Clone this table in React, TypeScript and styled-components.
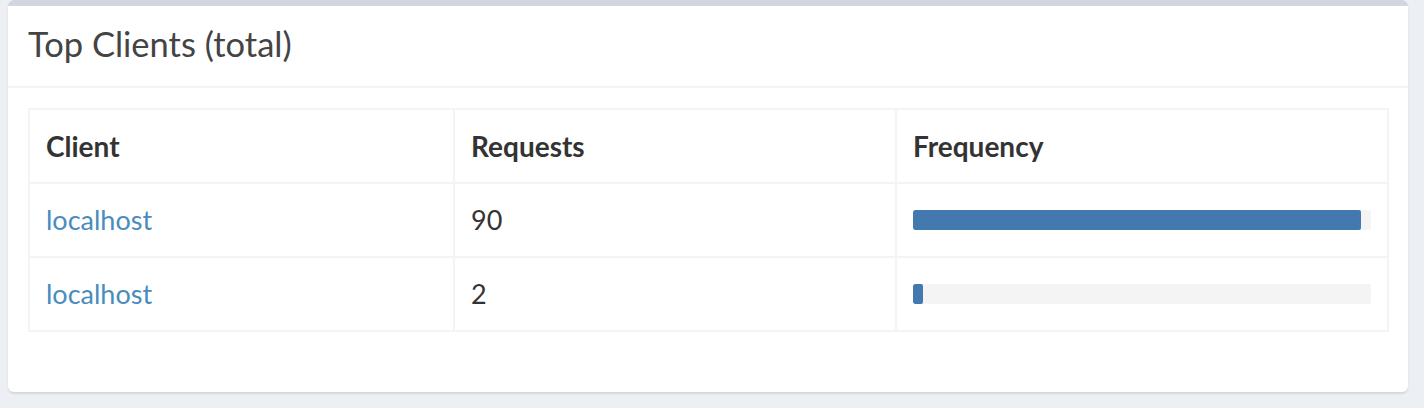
import React from "react";
import styled, { createGlobalStyle } from "styled-components";

const GlobalStyle = createGlobalStyle`
  html, body {
    margin: 0;
    padding: 0;
    background: #ecf0f5;
    font-family: Lato, "Noto Sans", sans-serif;
    color: #333;
  }
`;

const Page = styled.div`
  padding: 0 16px 0 8px;
  height: 408px;
  box-sizing: border-box;
`;

const Box = styled.section`
  background: #fff;
  border-top: 6px solid #d2d6de;
  border-radius: 6px;
  box-shadow: 0 2px 2px rgba(0, 0, 0, 0.1);
`;

const BoxHeader = styled.header`
  display: flex;
  align-items: center;
  height: 82px;
  padding: 0 20px 4px;
  box-sizing: border-box;
  border-bottom: 2px solid #f4f4f4;
`;

const Title = styled.h3`
  margin: 0;
  font-size: 34.5px;
  font-weight: 400;
  color: #444;
  line-height: 1;
`;

const BoxBody = styled.div`
  padding: 20px 21px 20px 20px;
`;

const Table = styled.table`
  width: 100%;
  border-collapse: collapse;
  border: 2px solid #f4f4f4;
  margin-bottom: 40px;
  table-layout: fixed;
`;

const Th = styled.th<{ $w: number }>`
  box-sizing: border-box;
  width: ${(p) => p.$w}px;
  text-align: left;
  font-weight: 700;
  font-size: 28px;
  color: #333;
  line-height: 40px;
  padding: 16px;
  border: 2px solid #f4f4f4;
  vertical-align: middle;
`;

const Td = styled.td`
  font-size: 27px;
  line-height: 40px;
  padding: 16px;
  border: 2px solid #f4f4f4;
  vertical-align: middle;
  color: #333;
`;

const ClientLink = styled.a`
  color: #4a8cbe;
  text-decoration: none;
`;

const Track = styled.div`
  height: 20px;
  background: #f4f4f4;
  border-radius: 2px;
  overflow: hidden;
`;

const Fill = styled.div`
  height: 100%;
  background: #4479b0;
  border-radius: 2px;
`;

const rows = [
  { client: "localhost", requests: 90 },
  { client: "localhost", requests: 2 },
];

const total = rows.reduce((s, r) => s + r.requests, 0);

export default function App() {
  return (
    <>
      <GlobalStyle />
      <Page>
        <Box>
          <BoxHeader>
            <Title>Top Clients (total)</Title>
          </BoxHeader>
          <BoxBody>
            <Table>
              <thead>
                <tr>
                  <Th $w={425}>Client</Th>
                  <Th $w={442}>Requests</Th>
                  <Th $w={492}>Frequency</Th>
                </tr>
              </thead>
              <tbody>
                {rows.map((r, i) => (
                  <tr key={i}>
                    <Td>
                      <ClientLink href="#">{r.client}</ClientLink>
                    </Td>
                    <Td>{r.requests}</Td>
                    <Td>
                      <Track>
                        <Fill style={{ width: `${(r.requests / total) * 100}%` }} />
                      </Track>
                    </Td>
                  </tr>
                ))}
              </tbody>
            </Table>
          </BoxBody>
        </Box>
      </Page>
    </>
  );
}
